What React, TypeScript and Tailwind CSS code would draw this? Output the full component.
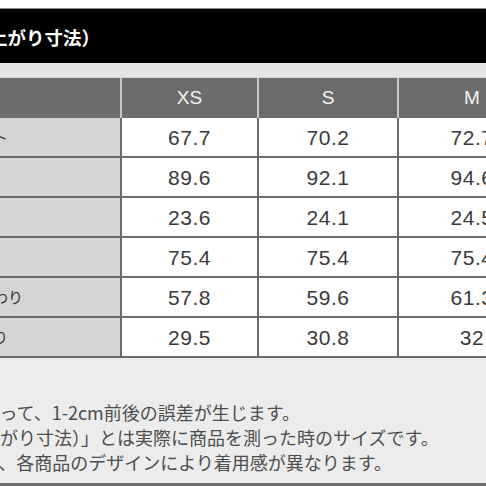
const SIZES = ["XS", "S", "M"];

const ROWS = [
  { label: "バスト", values: ["67.7", "70.2", "72.7"] },
  { label: "身幅", values: ["89.6", "92.1", "94.6"] },
  { label: "肩幅", values: ["23.6", "24.1", "24.5"] },
  { label: "袖丈", values: ["75.4", "75.4", "75.4"] },
  { label: "裾まわり", values: ["57.8", "59.6", "61.3"] },
  { label: "袖ぐり", values: ["29.5", "30.8", "32"] },
];

const NOTES = [
  "※測り方などによって、1-2cm前後の誤差が生じます。",
  "「商品寸法（仕上がり寸法）」とは実際に商品を測った時のサイズです。",
  "※商品によっては、各商品のデザインにより着用感が異なります。",
];

const COLS = "grid grid-cols-[165px_135px_138px_146px]";

export default function App() {
  return (
    <div className="flex h-[486px] w-[486px] flex-col overflow-hidden bg-white font-['Liberation_Sans','Noto_Sans_CJK_JP',sans-serif]">
      {/* title bar */}
      <div className="h-[8px] shrink-0 bg-white" />
      <div className="flex h-[55px] shrink-0 items-center border-t border-[#8a8a8a] bg-black pt-[3px]">
        <span className="-ml-[48px] whitespace-nowrap font-['Noto_Sans_CJK_JP',sans-serif] text-[18.5px] font-bold text-white">
          （仕上がり寸法）
        </span>
      </div>
      <div className="h-[14px] shrink-0 bg-[#e4e4e4]" />

      {/* table */}
      <div className="-ml-[45px] shrink-0">
        <div className={`${COLS} h-[41px] gap-x-[2px] border-t border-[#d8d8d8] bg-[#c6c6c6]`}>
          <div className="bg-[#6c6c6c]" />
          {SIZES.map((s) => (
            <div
              key={s}
              className="flex items-center justify-center bg-[#6c6c6c] text-[19px] text-[#f3f3f3]"
            >
              {s}
            </div>
          ))}
        </div>
        <div className={`${COLS} auto-rows-[38px] gap-[2px] bg-[#6a6a6a] pb-[2px]`}>
          {ROWS.map((r) => (
            <div key={r.label} className="contents">
              <div className="flex items-center whitespace-nowrap bg-[#d5d5d5] pl-[8px] font-['Noto_Sans_CJK_JP',sans-serif] text-[15px] text-[#333]">
                {r.label}
              </div>
              {r.values.map((v, i) => (
                <div
                  key={i}
                  className="flex items-center justify-center bg-white pt-[2px] text-[21px] tracking-[0.5px] text-[#3a3a3a]"
                >
                  {v}
                </div>
              ))}
            </div>
          ))}
        </div>
      </div>

      {/* notes */}
      <div className="flex flex-1 flex-col border-b-[3px] border-[#707070] bg-[#ececec] pt-[42px]">
        {NOTES.map((n) => (
          <div
            key={n}
            className="-ml-[144px] whitespace-nowrap font-['Noto_Sans_CJK_JP',sans-serif] text-[18px] leading-[25px] text-[#4d4d4d]"
          >
            {n}
          </div>
        ))}
      </div>
    </div>
  );
}
